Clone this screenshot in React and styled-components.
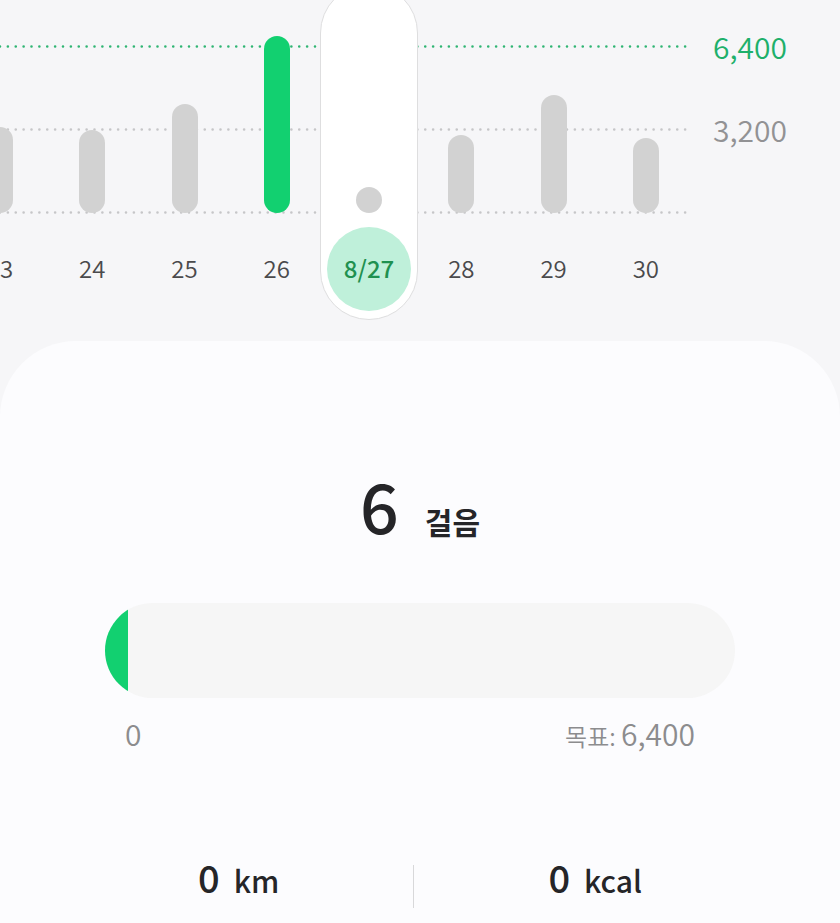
import React, { useState } from 'react'
import styled, { createGlobalStyle, css } from 'styled-components'

const GlobalStyle = createGlobalStyle`
  * {
    box-sizing: border-box;
  }
  body {
    margin: 0;
    background-color: #fcfcfe;
    color: #252528;
    font-family: "Noto Sans CJK KR", "Noto Sans", sans-serif;
  }
`

const Page = styled.main`
  min-height: 100vh;
  background-color: #f6f6f8;
  display: flex;
  flex-direction: column;
  overflow: hidden;
`

const Chart = styled.section`
  display: flex;
  padding-bottom: 21px;
`

const Plot = styled.div`
  flex: 1;
  min-width: 0;
  display: grid;
`

const GridLines = styled.svg`
  grid-area: 1 / 1;
  width: calc(100% - 5px);
  height: 220px;
`

const GridLine = styled.line`
  stroke: ${(props) => (props.$goal ? '#2fb573' : '#c6c6c8')};
  stroke-width: 2.6;
  stroke-linecap: round;
  stroke-dasharray: 0 7.875;
`

const Days = styled.div`
  grid-area: 1 / 1;
  min-width: 0;
  display: flex;
  align-items: flex-start;
  justify-content: flex-end;
`

const DayLabel = styled.span`
  width: 84px;
  height: 84px;
  padding-bottom: 4px;
  border-radius: 50%;
  display: flex;
  align-items: center;
  justify-content: center;
  color: #4a4a4c;
  font-size: 24px;
  font-weight: 350;
`

const Day = styled.button`
  flex: 0 0 calc(100% / 7.5);
  display: flex;
  flex-direction: column;
  align-items: center;
  gap: 14px;
  padding: 0;
  border: none;
  background: none;
  font-family: inherit;
  cursor: pointer;

  ${(props) =>
    props.$selected &&
    css`
      flex-basis: calc(100% / 7.5 + 6px);
      margin: -16px -3px 0;
      padding: 15px 0 8px;
      border: 1px solid #dededf;
      border-radius: 49px;
      background-color: #fff;

      ${DayLabel} {
        background-color: #bff0da;
        color: #1f9150;
        font-weight: 500;
      }
    `}
`

const BarTrack = styled.span`
  height: 213px;
  display: flex;
  align-items: flex-end;
`

const Bar = styled.span`
  width: 26px;
  min-height: 26px;
  border-radius: 13px;
  background-color: ${(props) => (props.$reached ? '#12d070' : '#d2d2d2')};
`

const Axis = styled.div`
  width: 148px;
  padding: 26px 0 0 21px;
  display: flex;
  flex-direction: column;
  gap: 43px;
`

const AxisLabel = styled.span`
  color: ${(props) => (props.$goal ? '#1eb06b' : '#929294')};
  font-size: 30px;
  font-weight: 350;
  line-height: 40px;
`

const Sheet = styled.section`
  flex: 1;
  padding: 124px 0 18px;
  border-radius: 76px 76px 0 0;
  background-color: #fcfcfe;
`

const Steps = styled.h1`
  margin: 0;
  display: flex;
  align-items: baseline;
  justify-content: center;
  gap: 26px;
  font-size: 68px;
  font-weight: 500;
  line-height: 80px;
`

const StepsUnit = styled.span`
  font-size: 30px;
  font-weight: 700;
  line-height: 40px;
`

const Goal = styled.div`
  width: 75%;
  margin: 58px auto 0;
`

const Progress = styled.div`
  height: 95px;
  border-radius: 48px;
  background-color: #f6f6f6;
  overflow: hidden;
`

const ProgressFill = styled.div`
  height: 100%;
  min-width: 23px;
  background-color: #12d070;
`

const GoalRange = styled.div`
  display: flex;
  align-items: baseline;
  justify-content: space-between;
  padding: 15px 40px 0 20px;
  color: #8c8c8e;
  font-size: 30px;
  font-weight: 350;
  line-height: 40px;
`

const GoalName = styled.span`
  font-size: 24px;
  line-height: 24px;
`

const Stats = styled.div`
  display: flex;
  padding: 0 64px;
  margin-top: 112px;
`

const Stat = styled.div`
  flex: 1 1 auto;
  display: flex;
  align-items: baseline;
  justify-content: center;
  gap: 14px;
  padding-bottom: 16px;
  font-size: 38px;
  font-weight: 500;
  line-height: 24px;

  & + & {
    border-left: 1px solid #d8d8da;
  }
`

const StatUnit = styled.span`
  font-size: 30px;
`

const GOAL = 6400

const days = [
  { label: '23', height: 86 },
  { label: '24', height: 83 },
  { label: '25', height: 109 },
  { label: '26', height: 177, reached: true },
  { label: '27', height: 0 },
  { label: '28', height: 78 },
  { label: '29', height: 118 },
  { label: '30', height: 75 },
]

const App = () => {
  const [selected, setSelected] = useState('27')
  const steps = 6

  return (
    <Page>
      <GlobalStyle />
      <Chart>
        <Plot>
          <GridLines aria-hidden="true">
            <GridLine $goal x1="0" y1="46.5" x2="100%" y2="46.5" />
            <GridLine x1="0" y1="129.5" x2="100%" y2="129.5" />
            <GridLine x1="0" y1="212.5" x2="100%" y2="212.5" />
          </GridLines>
          <Days>
            {days.map((day) => (
              <Day
                key={day.label}
                type="button"
                $selected={day.label === selected}
                onClick={() => setSelected(day.label)}
              >
                <BarTrack>
                  <Bar $reached={day.reached} style={{ height: day.height }} />
                </BarTrack>
                <DayLabel>{day.label === selected ? `8/${day.label}` : day.label}</DayLabel>
              </Day>
            ))}
          </Days>
        </Plot>
        <Axis>
          <AxisLabel $goal>6,400</AxisLabel>
          <AxisLabel>3,200</AxisLabel>
        </Axis>
      </Chart>

      <Sheet>
        <Steps>
          {steps} <StepsUnit>걸음</StepsUnit>
        </Steps>
        <Goal>
          <Progress role="progressbar" aria-label="걸음" aria-valuenow={steps} aria-valuemin={0} aria-valuemax={GOAL}>
            <ProgressFill style={{ width: `${(steps / GOAL) * 100}%` }} />
          </Progress>
          <GoalRange>
            <span>0</span>
            <span>
              <GoalName>목표: </GoalName>
              6,400
            </span>
          </GoalRange>
        </Goal>
        <Stats>
          <Stat>
            0 <StatUnit>km</StatUnit>
          </Stat>
          <Stat>
            0 <StatUnit>kcal</StatUnit>
          </Stat>
        </Stats>
      </Sheet>
    </Page>
  )
}

export default App
